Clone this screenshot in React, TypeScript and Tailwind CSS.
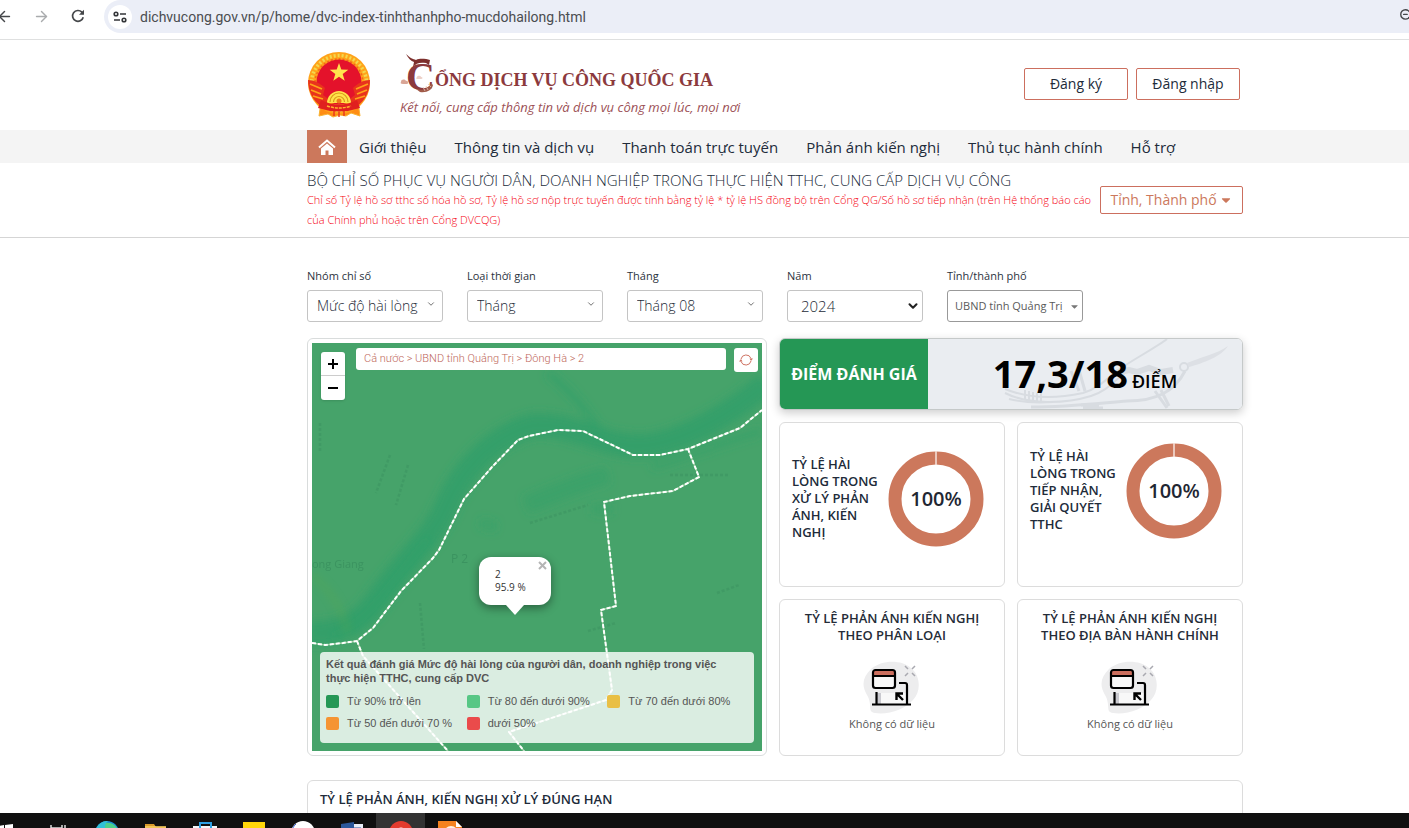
import { useState, type ReactNode } from 'react';
import { FaCaretDown } from 'react-icons/fa';
import { LuArrowLeft, LuArrowRight, LuChevronDown, LuZoomOut } from 'react-icons/lu';

const menu = [
  'Giới thiệu',
  'Thông tin và dịch vụ',
  'Thanh toán trực tuyến',
  'Phản ánh kiến nghị',
  'Thủ tục hành chính',
  'Hỗ trợ',
];

const legend = [
  { label: 'Từ 90% trở lên', color: 'bg-[#259755]' },
  { label: 'Từ 80 đến dưới 90%', color: 'bg-[#57c785]' },
  { label: 'Từ 70 đến dưới 80%', color: 'bg-[#e9bf45]' },
  { label: 'Từ 50 đến dưới 70 %', color: 'bg-[#f59433]' },
  { label: 'dưới 50%', color: 'bg-[#ea4b4b]' },
];

const BrowserBar = (): JSX.Element => {
  const [url, setUrl] = useState(
    'dichvucong.gov.vn/p/home/dvc-index-tinhthanhpho-mucdohailong.html',
  );

  return (
    <div className="flex h-10 shrink-0 items-start border-b border-[#dfe0e0]">
      <div className="flex h-8 w-[104px] shrink-0 items-center text-[#45474a]">
        <button type="button" aria-label="Back" className="-ml-1">
          <LuArrowLeft size={17} />
        </button>
        <button
          type="button"
          aria-label="Forward"
          className="ml-5 text-[#a9abad]"
        >
          <LuArrowRight size={17} />
        </button>
        <button type="button" aria-label="Reload" className="ml-5">
          <svg width="16" height="16" viewBox="0 0 16 16" fill="none">
            <path
              d="M13.2 9.2a5.4 5.4 0 1 1-1.3-5L13.4 5.8"
              stroke="currentColor"
              strokeWidth="1.7"
            />
            <path d="M14 1.8v5H9z" fill="currentColor" />
          </svg>
        </button>
      </div>
      <div className="flex h-[33px] min-w-0 flex-1 items-center rounded-l-full bg-[#ebeef7] pl-1">
        <span className="flex size-6 shrink-0 items-center justify-center rounded-full bg-white">
          <svg width="14" height="12" viewBox="0 0 14 12" fill="none">
            <g stroke="#333538" strokeWidth="1.6">
              <circle cx="3" cy="3" r="1.8" />
              <path d="M7 3h6M1 9h6" />
              <circle cx="11" cy="9" r="1.8" />
            </g>
          </svg>
        </span>
        <input
          aria-label="Address"
          value={url}
          onChange={(e) => {
            setUrl(e.target.value);
          }}
          className="ml-2 min-w-0 flex-1 bg-transparent font-['Roboto',sans-serif] text-sm text-[#4a4c50] outline-none"
        />
        <button
          type="button"
          aria-label="Zoom"
          className="-mr-1 mb-1 text-[#45474a]"
        >
          <LuZoomOut size={14} strokeWidth={2.4} />
        </button>
      </div>
    </div>
  );
};

const Emblem = (): JSX.Element => (
  <svg width="65" height="67" viewBox="0 0 65 67" aria-hidden="true">
    <path
      d="M15 44h35l3 21-9-3-5 3-6-1-7 2-5-3-9 2z"
      fill="#ff8d14"
      stroke="#f9b233"
      strokeWidth="1"
    />
    <circle cx="32" cy="32" r="31" fill="#ffa31a" />
    <circle
      cx="32"
      cy="32"
      r="27.5"
      fill="none"
      stroke="#f3d94e"
      strokeWidth="3.5"
      strokeDasharray="2 2"
    />
    <circle
      cx="32"
      cy="32"
      r="24"
      fill="none"
      stroke="#f2661b"
      strokeWidth="1.5"
      strokeDasharray="2 2"
    />
    <circle cx="32" cy="31" r="22.5" fill="#e4122b" />
    <path
      d="m32 12 2.3 6.6 7 .1-5.6 4.3 2 6.7-5.7-4-5.7 4 2-6.7-5.6-4.3 7-.1z"
      fill="#ffe34d"
    />
    <path
      d="M1 29c6 0 12 3 17 8l-2 7 8 6-10 5C6 50 1 40 1 29zM63 29c-6 0-12 3-17 8l2 7-8 6 10 5c8-5 13-15 13-26z"
      fill="#e8331d"
    />
    <path
      d="m3 33 12 5m-11 1 10 4m-8 2 10 3M61 33l-12 5m11 1-10 4m8 2-10 3"
      stroke="#ffa31a"
      strokeWidth="1.8"
    />
    <path d="M20 52a12 12 0 1 1 24 0z" fill="#ffe14a" />
    <path
      d="M23 51a9 9 0 0 1 18 0M26.500 51a5.500 5.500 0 0 1 11 0"
      fill="none"
      stroke="#d99a1b"
      strokeWidth="1.2"
    />
    <circle cx="32" cy="50" r="2.500" fill="#f07a1a" />
    <path d="M14 49q18 9 36 0l3 8q-21 7-42 0z" fill="#e0201f" />
    <path
      d="M20 55q12 4 24 0"
      fill="none"
      stroke="#ffb52b"
      strokeWidth="1.5"
      strokeDasharray="3 1"
    />
    <path d="M27 60v5m5-4v5m5-6v5" stroke="#e8331d" strokeWidth="1.4" />
  </svg>
);

const Brand = (): JSX.Element => (
  <a href="#home" className="flex items-center">
    <Emblem />
    <span className="ml-7 flex flex-col text-[#8c3a3d]">
      <span className="relative flex h-10 items-end pl-[6px]">
        <svg
          className="absolute top-0 left-0"
          width="34"
          height="40"
          viewBox="0 0 34 40"
          aria-hidden="true"
        >
          <path
            d="M6 0c4 4 7 5 10 6 4-2 10-1 14 0l-1 5-3-2c-6-1-10 0-13 4l1-5C11 7 8 4 6 0z"
            fill="#7d2f2c"
          />
          <path
            d="M31 29c-2 6-8 8-15 6l4 3c7 1 12-2 13-7z"
            fill="#a05a48"
          />
          <path
            d="m23 33 2 4m1-5 2 4m0-6 3 3"
            stroke="#e4c1b6"
            strokeWidth=".8"
          />
          <path
            d="M1 28c0-3 4-3 5-1 2-1 3 3 1 3H3c-2 0-3-1-2-2z"
            fill="#d9a596"
          />
          <path
            d="M17 23c1-2 4-1 4 0 2 0 2 2 0 2h-4c-1 0-1-1 0-2z"
            fill="#ecd0c7"
          />
        </svg>
        <span className="font-['Liberation_Serif',serif] text-[40px] leading-[34px] font-bold">
          C
        </span>
        <span className="font-['Liberation_Serif',serif] text-lg leading-7 font-bold">
          ỔNG DỊCH VỤ CÔNG QUỐC GIA
        </span>
      </span>
      <span className="mt-[5px] text-[13px] leading-4 text-[#9c5156] italic">
        Kết nối, cung cấp thông tin và dịch vụ công mọi lúc, mọi nơi
      </span>
    </span>
  </a>
);

const Field = ({
  id,
  label,
  children,
}: {
  id: string;
  label: string;
  children: ReactNode;
}): JSX.Element => (
  <div className="flex min-w-0 flex-col gap-1">
    <label htmlFor={id} className="text-[11px] leading-5 text-[#2b3340]">
      {label}
    </label>
    <div className="relative">{children}</div>
  </div>
);

const selectClass =
  'h-8 w-full appearance-none rounded-[3px] border border-[#c4c4c4] bg-white pl-[9px] text-sm font-light text-[#252c38]';

const Filters = (): JSX.Element => (
  <form className="grid grid-cols-6 gap-6 pt-7">
    <Field id="group" label="Nhóm chỉ số">
      <select id="group" className={selectClass}>
        <option>Mức độ hài lòng</option>
      </select>
      <LuChevronDown
        size={10}
        className="pointer-events-none absolute top-[9px] right-[7px] text-[#555]"
      />
    </Field>
    <Field id="period" label="Loại thời gian">
      <select id="period" className={selectClass}>
        <option>Tháng</option>
      </select>
      <LuChevronDown
        size={10}
        className="pointer-events-none absolute top-[9px] right-[7px] text-[#555]"
      />
    </Field>
    <Field id="month" label="Tháng">
      <select id="month" className={selectClass}>
        <option>Tháng 08</option>
      </select>
      <LuChevronDown
        size={10}
        className="pointer-events-none absolute top-[9px] right-[7px] text-[#555]"
      />
    </Field>
    <Field id="year" label="Năm">
      <select
        id="year"
        className="h-8 w-full appearance-none rounded-[3px] border border-[#c4c4c4] bg-white pl-[13px] text-[15px] font-light text-[#252c38]"
      >
        <option>2024</option>
      </select>
      <LuChevronDown
        size={14}
        strokeWidth={3.5}
        className="pointer-events-none absolute top-[9px] right-[3px] text-[#222]"
      />
    </Field>
    <Field id="province" label="Tỉnh/thành phố">
      <select
        id="province"
        className="h-8 w-full appearance-none rounded-[3px] border border-[#999] bg-white pl-[7px] text-[11px] text-[#5a5a5a]"
      >
        <option>UBND tỉnh Quảng Trị</option>
      </select>
      <FaCaretDown
        size={11}
        className="pointer-events-none absolute top-[11px] right-[3px] text-[#777]"
      />
    </Field>
  </form>
);

const MapDrawing = (): JSX.Element => (
  <svg
    className="absolute inset-0 size-full"
    viewBox="0 0 450 408"
    preserveAspectRatio="xMidYMid slice"
    aria-hidden="true"
  >
    <defs>
      <filter id="soft" x="-20%" y="-20%" width="140%" height="140%">
        <feGaussianBlur stdDeviation="4" />
      </filter>
    </defs>
    <rect width="450" height="408" fill="#46a36a" />
    <g fill="none" stroke="#2f9f69" filter="url(#soft)">
      <path
        d="M-5 290C30 292 50 278 64 258C90 220 120 196 134 164C150 126 182 92 222 82C262 80 290 104 330 103C370 100 420 70 455 40"
        strokeWidth="24"
        opacity=".8"
      />
      <path
        d="M20 296C60 278 84 236 118 196"
        strokeWidth="12"
        opacity=".7"
      />
      <path d="M236 30C256 46 276 68 290 92" strokeWidth="7" opacity=".6" />
      <path d="M214 162C240 152 266 140 296 132" strokeWidth="18" opacity=".5" />
      <path d="M340 124C380 112 420 96 450 88" strokeWidth="8" opacity=".5" />
      <path d="M168 180l16 4M280 166h20" strokeWidth="10" opacity=".5" />
    </g>
    <path
      d="M0 232c18 14 30 34 36 58"
      fill="none"
      stroke="#5aa84f"
      strokeWidth="5"
      opacity=".4"
      filter="url(#soft)"
    />
    <g fill="#34895a" opacity=".6" fontFamily="Open Sans, sans-serif">
      <text x="0" y="225" fontSize="11">
        ong Giang
      </text>
      <text x="139" y="220" fontSize="12">
        P 2
      </text>
    </g>
    <g
      fill="none"
      stroke="#34895a"
      strokeWidth="2.500"
      strokeDasharray="3 2"
      opacity=".3"
    >
      <path d="M78 112l-14 38M96 122l-12 40M8 80v30M108 260l4 46" />
      <path d="M218 180l58-18M358 132h60M405 250l22-8M276 288l28-8" />
    </g>
    <g fill="none" stroke="#eef8d9" strokeWidth="1.500" opacity=".55">
      <path d="M0 300 13 302 31 300 45 298 61 285 89 248 121 215 127 207 152 156 180 124 206 97 217 93 246 87 271 88 321 112 348 112 376 106 428 85 450 67" />
      <path d="M376 106 387 134 361 148 318 153 292 159 304 263 289 267 300 347 294 357 197 389 212 408" />
      <path d="M45 298 51 313 136 408" />
    </g>
    <g
      fill="none"
      stroke="#fff"
      strokeWidth="2"
      strokeDasharray="4 2"
      strokeLinejoin="round"
    >
      <path d="M0 300 13 302 31 300 45 298 61 285 89 248 121 215 127 207 152 156 180 124 206 97 217 93 246 87 271 88 321 112 348 112 376 106 428 85 450 67" />
      <path d="M376 106 387 134 361 148 318 153 292 159 304 263 289 267 300 347 294 357 197 389 212 408" />
      <path d="M45 298 51 313 136 408" />
    </g>
  </svg>
);

const MapCard = (): JSX.Element => (
  <section className="rounded-md border border-[#d9dcdc] p-1">
    <div className="relative h-full overflow-hidden">
      <MapDrawing />
      <div className="absolute top-[5px] right-1 left-[9px] flex items-start">
        <div className="mt-1 flex w-6 flex-col overflow-hidden rounded-[3px] bg-white shadow">
          <button
            type="button"
            aria-label="Phóng to"
            className="flex h-6 items-center justify-center border-b border-[#ccc]"
          >
            <svg width="12" height="12" viewBox="0 0 12 12">
              <path d="M6 1v10M1 6h10" stroke="#000" strokeWidth="2" />
            </svg>
          </button>
          <button
            type="button"
            aria-label="Thu nhỏ"
            className="flex h-6 items-center justify-center"
          >
            <svg width="12" height="12" viewBox="0 0 12 12">
              <path d="M1 6h10" stroke="#000" strokeWidth="2" />
            </svg>
          </button>
        </div>
        <div className="ml-[11px] h-[22px] flex-1 rounded-[3px] bg-white px-2 font-['Roboto',sans-serif] text-[11px] leading-[22px] font-light text-[#c0695c]">
          Cả nước &gt; UBND tỉnh Quảng Trị &gt; Đông Hà &gt; 2
        </div>
        <button
          type="button"
          aria-label="Làm mới"
          className="ml-2 flex size-6 items-center justify-center rounded-[3px] bg-white text-[#cf7464]"
        >
          <svg width="14" height="14" viewBox="0 0 14 14" fill="none">
            <path
              d="M2 6a5.200 5.200 0 0 1 10-.5M12 8a5.200 5.200 0 0 1-10 .5"
              stroke="currentColor"
            />
            <path d="M10.500 5.500H14L12 8zM0 8.500h3.500L2 6z" fill="currentColor" />
          </svg>
        </button>
      </div>
      {/* popup over the selected ward */}
      <div className="absolute top-[214px] left-[167px] h-12 w-[72px] rounded-xl bg-white pt-[11px] pl-4 text-[10px] leading-[13px] text-[#333] shadow-[0_3px_10px_rgba(0,0,0,0.4)]">
        2
        <br />
        95.9 %
        <button
          type="button"
          aria-label="Đóng"
          className="absolute top-1 right-1"
        >
          <svg width="9" height="9" viewBox="0 0 9 9">
            <path d="m1 1 7 7m0-7-7 7" stroke="#b5b5b5" strokeWidth="2" />
          </svg>
        </button>
        <svg
          className="absolute top-full left-[26px]"
          width="20"
          height="10"
          viewBox="0 0 20 10"
        >
          <path d="M1 0h18l-9 10z" fill="#fff" />
        </svg>
      </div>
      <div className="absolute right-2 bottom-2 left-2 h-[91px] rounded bg-white/80 px-[6px] pt-[5px] font-['Liberation_Sans',Arial,sans-serif] text-[11px] text-[#555]">
        <h4 className="pr-6 leading-[14px] font-bold">
          Kết quả đánh giá Mức độ hài lòng của người dân, doanh nghiệp trong
          việc thực hiện TTHC, cung cấp DVC
        </h4>
        <ul className="mt-[5px] grid grid-cols-3 leading-[22px]">
          {legend.map((item) => (
            <li
              key={item.label}
              className="flex items-center gap-2 whitespace-nowrap"
            >
              <span className={`size-[13px] rounded-[2px] ${item.color}`} />
              {item.label}
            </li>
          ))}
        </ul>
      </div>
    </div>
  </section>
);

const Score = (): JSX.Element => (
  <section className="col-span-2 flex h-[72px] overflow-hidden rounded-md border border-[#c5c9c9] shadow-[0_3px_10px_rgba(0,0,0,0.2)]">
    <h3 className="flex w-[148px] shrink-0 items-center justify-center bg-[#259755] text-base font-bold text-white">
      ĐIỂM ĐÁNH GIÁ
    </h3>
    <div className="relative flex flex-1 items-center justify-center bg-[#eaedf1]">
      <svg
        className="absolute inset-0 size-full"
        viewBox="0 0 315 70"
        preserveAspectRatio="xMaxYMid slice"
        fill="none"
        aria-hidden="true"
      >
        <g stroke="#d8dce1">
          <path
            d="M78 50c24 10 50 10 78 4 14-4 24-14 34-22S230 8 240 0"
            strokeWidth="2"
          />
          <path
            d="M78 54c24 12 60 11 86 3 16-5 24-16 34-23"
            strokeWidth="2"
          />
          <path d="M82 60c16 4 30 4 44 3" strokeWidth="2" />
          <path
            d="M104 68c40 0 70-4 96-6 30 0 48-10 58-30"
            strokeWidth="3"
          />
          <path d="M188 34l14-3 8 2 12-4 12 4 12-2" strokeWidth="6" />
          <path
            d="M98 51v9m4-8v9m4-8v9m4-8v8m4-8v8"
            strokeWidth="2"
          />
          <path d="m150 24 8 28m-14-20 8 20m76 0 12 17m-6-18 8 16" strokeWidth="3" />
          <path d="M176 69h-20m16-3h-18" strokeWidth="3" />
          <circle cx="257" cy="28" r="4" strokeWidth="2" />
        </g>
        <path d="M260 24c14-6 30-9 41-17-6 10-24 17-39 21z" fill="#dde0e5" />
      </svg>
      <p className="relative flex items-baseline gap-1 text-black">
        <span className="text-[38px] leading-none font-bold">17,3/18</span>
        <span className="text-lg font-semibold">ĐIỂM</span>
      </p>
    </div>
  </section>
);

const Donut = ({ value }: { value: number }): JSX.Element => (
  <div className="relative size-[96px] shrink-0">
    <svg width="96" height="96" viewBox="0 0 96 96" aria-hidden="true">
      <circle
        cx="48"
        cy="48"
        r="41"
        fill="none"
        stroke="#cc785c"
        strokeWidth="13"
      />
      <path d="M48 0v14" stroke="#f6e3dc" strokeWidth="1.500" />
    </svg>
    <span className="absolute inset-0 flex items-center justify-center text-xl font-semibold text-[#1f2733]">
      {value}%
    </span>
  </div>
);

const EmptyCard = ({ title }: { title: string }): JSX.Element => (
  <section className="flex h-[157px] flex-col items-center rounded-md border border-[#dcdcdc] px-5 pt-[10px]">
    <h3 className="text-center text-[13px] leading-[17px] font-semibold text-[#252c38]">
      {title}
    </h3>
    <svg
      className="mt-[17px]"
      width="58"
      height="54"
      viewBox="0 0 58 54"
      fill="none"
      aria-hidden="true"
    >
      <path
        d="M8 8C18-1 38-2 48 7c10 8 10 24 2 32-8 9-24 15-38 13-8-1-2-8-8-18S0 16 8 8z"
        fill="#ededee"
      />
      <path d="M14 32h30v12H14z" fill="#f8f8f8" />
      <path d="M14 32h4v12h-4z" fill="#c9c9cf" />
      <path
        d="m42 5 3 3m7-3-3 3m-7 7 3-3m7 3-3-3"
        stroke="#a9a9b0"
        strokeWidth="1.500"
      />
      <rect x="10" y="9" width="22" height="18" rx="2" fill="#f8f8f8" />
      <path d="M10 10h22v5H10z" fill="#cc6f5e" />
      <rect
        x="10"
        y="9"
        width="22"
        height="18"
        rx="2.500"
        stroke="#000"
        strokeWidth="2.200"
      />
      <path
        d="M10 15h22M13.500 31v13M36 22h6q2 0 2 2v20M9 43.500h39"
        stroke="#000"
        strokeWidth="2.200"
      />
      <path d="m40 39-6-6M33.500 39v-6.500H40" stroke="#000" strokeWidth="2.400" />
    </svg>
    <p className="mt-px text-[11px] leading-4 text-[#555]">Không có dữ liệu</p>
  </section>
);

const Taskbar = (): JSX.Element => (
  <div className="flex h-[15px] shrink-0 items-start overflow-hidden bg-[#101010]">
    <div className="-ml-4 flex">
      {[
        { name: 'Start', icon: <path d="M1 5l6-1v20H1zM8 4l8-1v21H8z" fill="#fff" /> },
        {
          name: 'Task view',
          icon: (
            <path
              d="M5 4v3h11V4M5 24V11h11v13M19 4v3m0 3v12"
              stroke="#ddd"
              strokeWidth="1.500"
              fill="none"
            />
          ),
        },
        {
          name: 'Edge',
          icon: (
            <>
              <circle cx="12" cy="12" r="12" fill="#1b8fd6" />
              <path d="M1 9a12 12 0 0 1 22 0c0 4-6 6-8 3-3-5-10-5-14-3z" fill="#4ccf8a" />
              <path d="M1 8A12 12 0 0 1 13 0c-3 2-3 5-3 8-4-1-7 0-9 0z" fill="#2fc0d6" />
            </>
          ),
        },
        {
          name: 'Explorer',
          icon: (
            <>
              <path d="M1 3h9l2 3h10v16H1z" fill="#d99a2b" />
              <path d="M1 5h21v17H1z" fill="#f9cf62" opacity=".8" />
            </>
          ),
        },
        {
          name: 'Store',
          icon: (
            <>
              <path d="M0 5h24v19H0z" fill="#f3f6f8" />
              <path d="M7 8V2h11v6" fill="none" stroke="#2d9fe3" strokeWidth="2" />
            </>
          ),
        },
        { name: 'Notes', icon: <path d="M1 1h22v22H1z" fill="#ffd60a" /> },
        {
          name: 'Chat',
          icon: (
            <>
              <circle cx="12" cy="12" r="12" fill="#fff" />
              <path d="M1 12A11 11 0 0 1 5 3" stroke="#3b63d8" fill="none" />
            </>
          ),
        },
        {
          name: 'Word',
          icon: (
            <>
              <path d="M12 3h11v20H12z" fill="#e9eef8" />
              <path d="M1 3l13-2v22H1z" fill="#2b579a" />
              <path d="M14 7h7" stroke="#2b579a" />
            </>
          ),
        },
        {
          name: 'Chrome',
          icon: (
            <>
              <circle cx="12" cy="12" r="12" fill="#e33b2e" />
              <circle cx="12" cy="12" r="5.500" fill="#fff" />
            </>
          ),
        },
        {
          name: 'Editor',
          icon: (
            <>
              <path d="M0 0h18l6 6v18H0z" fill="#f5821f" />
              <path d="M18 0v6h6z" fill="#fff" />
              <circle cx="13" cy="12" r="7" fill="#fff3e6" />
            </>
          ),
        },
      ].map(({ name, icon }) => (
        <button
          key={name}
          type="button"
          aria-label={name}
          className={`flex h-10 w-[49px] shrink-0 justify-center pt-2 ${
            name === 'Chrome' ? 'bg-[#333]' : ''
          }`}
        >
          <svg width="24" height="24" viewBox="0 0 24 24">
            {icon}
          </svg>
        </button>
      ))}
    </div>
  </div>
);

export default function App(): JSX.Element {
  return (
    <div className="flex h-screen flex-col overflow-hidden bg-white font-['Open_Sans','Noto_Sans',sans-serif] text-[#212b3a]">
      <BrowserBar />
      <main className="min-h-0 flex-1 overflow-hidden">
        <header className="mr-[166px] ml-[307px] flex h-[90px] items-center justify-between pb-[2px]">
          <Brand />
          <div className="mr-[3px] flex gap-2">
            <button
              type="button"
              className="h-8 w-[104px] rounded-[2px] border border-[#cc6f5e] text-sm"
            >
              Đăng ký
            </button>
            <button
              type="button"
              className="h-8 w-[104px] rounded-[2px] border border-[#cc6f5e] text-sm"
            >
              Đăng nhập
            </button>
          </div>
        </header>
        <nav className="flex h-[33px] items-center bg-[#f4f4f4] pr-[166px] pl-[307px]">
          <a
            href="#home"
            aria-label="Trang chủ"
            className="flex h-full w-10 items-center justify-center bg-[#cc785c] text-white"
          >
            <svg width="18" height="16" viewBox="0 0 18 16" fill="none">
              <path
                d="m1 8.500 8-7 8 7"
                stroke="currentColor"
                strokeWidth="2"
              />
              <path
                d="m9 4.500 6 5V16h-4.500v-4.500h-3V16H3V9.500z"
                fill="currentColor"
              />
            </svg>
          </a>
          <ul className="flex gap-7 pl-3 whitespace-nowrap">
            {menu.map((item) => (
              <li key={item}>
                <a href="#menu" className="text-[15px]">
                  {item}
                </a>
              </li>
            ))}
          </ul>
        </nav>
        <div className="border-b border-[#d5d5d5] pr-[166px] pl-[307px]">
          <div className="flex h-[74px] items-center">
            <div className="min-w-0 flex-1">
              <h1 className="text-[15px] leading-5 font-light">
                BỘ CHỈ SỐ PHỤC VỤ NGƯỜI DÂN, DOANH NGHIỆP TRONG THỰC HIỆN TTHC,
                CUNG CẤP DỊCH VỤ CÔNG
              </h1>
              <p className="text-[11px] leading-5 font-light text-[#f5000f]">
                Chỉ số Tỷ lệ hồ sơ tthc số hóa hồ sơ, Tỷ lệ hồ sơ nộp trực tuyến
                được tính bằng tỷ lệ * tỷ lệ HS đồng bộ trên Cổng QG/Số hồ sơ
                tiếp nhận (trên Hệ thống báo cáo của Chính phủ hoặc trên Cổng
                DVCQG)
              </p>
            </div>
            <button
              type="button"
              className="flex h-7 w-[143px] shrink-0 items-center justify-center gap-[2px] rounded-[2px] border border-[#cc6f5e] text-sm whitespace-nowrap text-[#cc785c]"
            >
              Tỉnh, Thành phố
              <FaCaretDown size={14} />
            </button>
          </div>
        </div>
        <div className="mr-[166px] ml-[307px]">
          <Filters />
          <div className="mt-4 grid grid-cols-[460fr_464fr] gap-3">
            <MapCard />
            <div className="grid grid-cols-2 gap-3">
              <Score />
              <section className="flex h-[165px] items-start justify-between rounded-md border border-[#dcdcdc] pt-7 pr-5 pl-3">
                <h3 className="mt-[5px] w-[92px] text-[13px] leading-[17px] font-semibold">
                  TỶ LỆ HÀI LÒNG TRONG XỬ LÝ PHẢN ÁNH, KIẾN NGHỊ
                </h3>
                <Donut value={100} />
              </section>
              <section className="flex h-[165px] items-start justify-between rounded-md border border-[#dcdcdc] pt-5 pr-5 pl-3">
                <h3 className="mt-[5px] w-[92px] text-[13px] leading-[17px] font-semibold">
                  TỶ LỆ HÀI LÒNG TRONG TIẾP NHẬN, GIẢI QUYẾT TTHC
                </h3>
                <Donut value={100} />
              </section>
              <EmptyCard title="TỶ LỆ PHẢN ÁNH KIẾN NGHỊ THEO PHÂN LOẠI" />
              <EmptyCard title="TỶ LỆ PHẢN ÁNH KIẾN NGHỊ THEO ĐỊA BÀN HÀNH CHÍNH" />
            </div>
          </div>
          <section className="mt-6 h-40 rounded-md border border-[#dcdcdc] px-3 pt-[10px]">
            <h3 className="text-[13px] leading-[17px] font-semibold">
              TỶ LỆ PHẢN ÁNH, KIẾN NGHỊ XỬ LÝ ĐÚNG HẠN
            </h3>
          </section>
        </div>
      </main>
      <Taskbar />
    </div>
  );
}
